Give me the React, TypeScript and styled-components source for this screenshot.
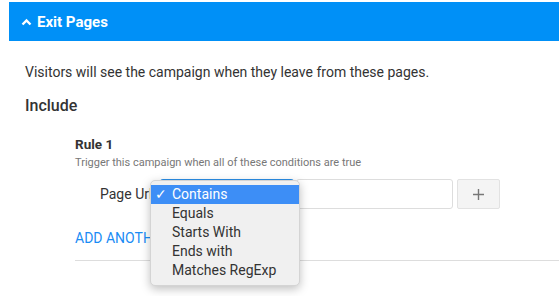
import React from 'react';
import styled, {createGlobalStyle} from "styled-components";

const GlobalStyle = createGlobalStyle`
  body {
    margin: 0;
    background: #fff;
    font-family: Roboto, "Noto Sans", sans-serif;
    color: #333;
  }
`

const options = ["Contains", "Equals", "Starts With", "Ends with", "Matches RegExp"];

export default function App() {
    return (
        <Page>
            <GlobalStyle/>
            <Header>
                <svg width="11" height="8" viewBox="0 0 11 8">
                    <polyline points="1.5,6.5 5.5,2.5 9.5,6.5" fill="none" stroke="#fff" strokeWidth="2.4"/>
                </svg>
                <HeaderTitle>Exit Pages</HeaderTitle>
            </Header>
            <Content>
                <Description>Visitors will see the campaign when they leave from these pages.</Description>
                <SectionTitle>Include</SectionTitle>
                <Rule>
                    <RuleTitle>Rule 1</RuleTitle>
                    <RuleHint>Trigger this campaign when all of these conditions are true</RuleHint>
                    <ConditionRow>
                        <FieldLabel>Page Url</FieldLabel>
                        <SelectWrap>
                            <SelectBox>Contains</SelectBox>
                            <Menu>
                                {options.map((o, i) => (
                                    <MenuItem key={o} $active={i === 0}>
                                        <Check>{i === 0 ? "✓" : ""}</Check>
                                        {o}
                                    </MenuItem>
                                ))}
                            </Menu>
                        </SelectWrap>
                        <TextInput/>
                        <AddButton>
                            <svg width="13" height="13" viewBox="0 0 13 13">
                                <path d="M6.5 1v11M1 6.5h11" stroke="#777" strokeWidth="1.4"/>
                            </svg>
                        </AddButton>
                    </ConditionRow>
                    <AddLink>ADD ANOTHER CONDITION</AddLink>
                    <Divider/>
                </Rule>
            </Content>
        </Page>
    );
}

const Page = styled.div`
  padding: 2px 0 0 9px;
  width: 550px;
  height: 294px;
  overflow: hidden;
`

const Header = styled.div`
  height: 39px;
  background: #0090f7;
  display: flex;
  align-items: center;
  gap: 5px;
  padding-left: 12px;
`

const HeaderTitle = styled.span`
  color: #fff;
  font-weight: 700;
  font-size: 15px;
`

const Content = styled.div`
  padding-left: 16px;
`

const Description = styled.div`
  margin-top: 21px;
  font-size: 14px;
  line-height: 20px;
  color: #333;
`

const SectionTitle = styled.div`
  margin-top: 13px;
  font-size: 16px;
  font-weight: 500;
  line-height: 22px;
  color: #333;
`

const Rule = styled.div`
  margin-top: 18px;
  padding-left: 50px;
`

const RuleTitle = styled.div`
  font-size: 13.5px;
  font-weight: 700;
  line-height: 18px;
  color: #333;
`

const RuleHint = styled.div`
  margin-top: 2px;
  font-size: 11px;
  line-height: 16px;
  color: #777;
`

const ConditionRow = styled.div`
  margin-top: 8px;
  padding-left: 25px;
  display: flex;
  align-items: center;
  height: 30px;
`

const FieldLabel = styled.span`
  width: 60px;
  font-size: 14px;
  color: #333;
`

const SelectWrap = styled.div`
  position: relative;
  width: 134px;
  height: 30px;
`

const SelectBox = styled.div`
  box-sizing: border-box;
  height: 30px;
  border: 1px solid #ddd;
  border-top: 1px solid #2b8ee6;
  border-radius: 3px;
  font-size: 14px;
  line-height: 28px;
  padding-left: 8px;
`

const Menu = styled.div`
  position: absolute;
  left: -10px;
  top: 1px;
  width: 150px;
  box-sizing: border-box;
  padding: 4px 0 5px;
  background: #f0f0f0;
  border-radius: 5px;
  border: 1px solid #d4d4d4;
  box-shadow: 0 3px 10px rgba(0, 0, 0, 0.25);
  z-index: 2;
`

const MenuItem = styled.div<{ $active: boolean }>`
  height: 19px;
  line-height: 19px;
  font-size: 14px;
  display: flex;
  background: ${p => p.$active ? "#3d8ef6" : "transparent"};
  color: ${p => p.$active ? "#fff" : "#333"};
`

const Check = styled.span`
  width: 21px;
  padding-left: 4px;
  box-sizing: border-box;
`

const TextInput = styled.div`
  box-sizing: border-box;
  margin-left: 2px;
  width: 157px;
  height: 30px;
  border: 1px solid #ddd;
  border-radius: 3px;
  background: #fff;
`

const AddButton = styled.div`
  box-sizing: border-box;
  margin-left: 4px;
  width: 43px;
  height: 30px;
  border: 1px solid #e2e2e2;
  border-radius: 2px;
  background: #f4f4f4;
  display: flex;
  align-items: center;
  justify-content: center;
`

const AddLink = styled.div`
  margin-top: 19px;
  font-size: 14px;
  line-height: 20px;
  color: #1a8cf5;
`

const Divider = styled.div`
  margin-top: 12px;
  height: 1px;
  background: #ddd;
`
